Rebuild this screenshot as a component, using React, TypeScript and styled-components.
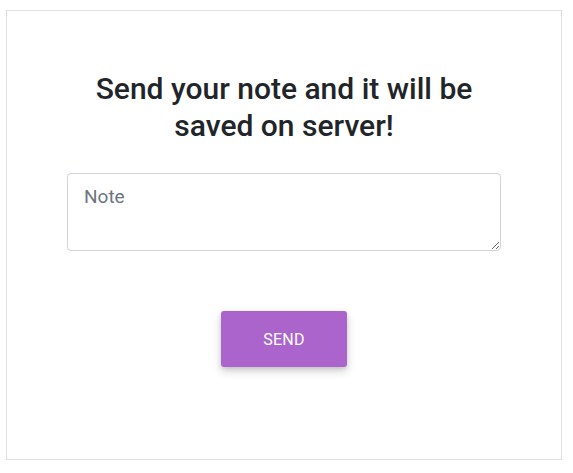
import React from "react";
import styled, { createGlobalStyle } from "styled-components";

const Global = createGlobalStyle`
  body {
    margin: 0;
    background: #ffffff;
    font-family: Roboto, "Noto Sans", sans-serif;
  }
  * { box-sizing: border-box; }
`;

const Card = styled.div`
  margin: 10px 0 0 6px;
  width: 556px;
  height: 450px;
  border: 1px solid #dedede;
  display: flex;
  flex-direction: column;
  align-items: center;
  padding-top: 59px;
`;

const Title = styled.h1`
  margin: 0;
  width: 420px;
  text-align: center;
  font-family: Roboto, sans-serif;
  font-weight: 500;
  font-size: 30px;
  line-height: 37px;
  color: #212529;
`;

const NoteArea = styled.textarea`
  margin-top: 29px;
  width: 434px;
  height: 78px;
  border: 1px solid #ced4da;
  border-radius: 4px;
  padding: 11px 16px;
  font-family: Roboto, sans-serif;
  font-size: 19px;
  line-height: 24px;
  color: #495057;
  resize: vertical;
  outline: none;
  &::placeholder {
    color: #6c757d;
  }
`;

const SendButton = styled.button`
  margin-top: 60px;
  width: 126px;
  height: 56px;
  border: none;
  border-radius: 3px;
  background: #aa64cc;
  color: #ffffff;
  font-family: Roboto, sans-serif;
  font-size: 16px;
  letter-spacing: 0.2px;
  text-transform: uppercase;
  box-shadow: 0 4px 10px rgba(0, 0, 0, 0.18), 0 2px 4px rgba(0, 0, 0, 0.1);
  cursor: pointer;
`;

export default function App() {
  return (
    <>
      <Global />
      <Card>
        <Title>Send your note and it will be saved on server!</Title>
        <NoteArea placeholder="Note" />
        <SendButton>Send</SendButton>
      </Card>
    </>
  );
}
